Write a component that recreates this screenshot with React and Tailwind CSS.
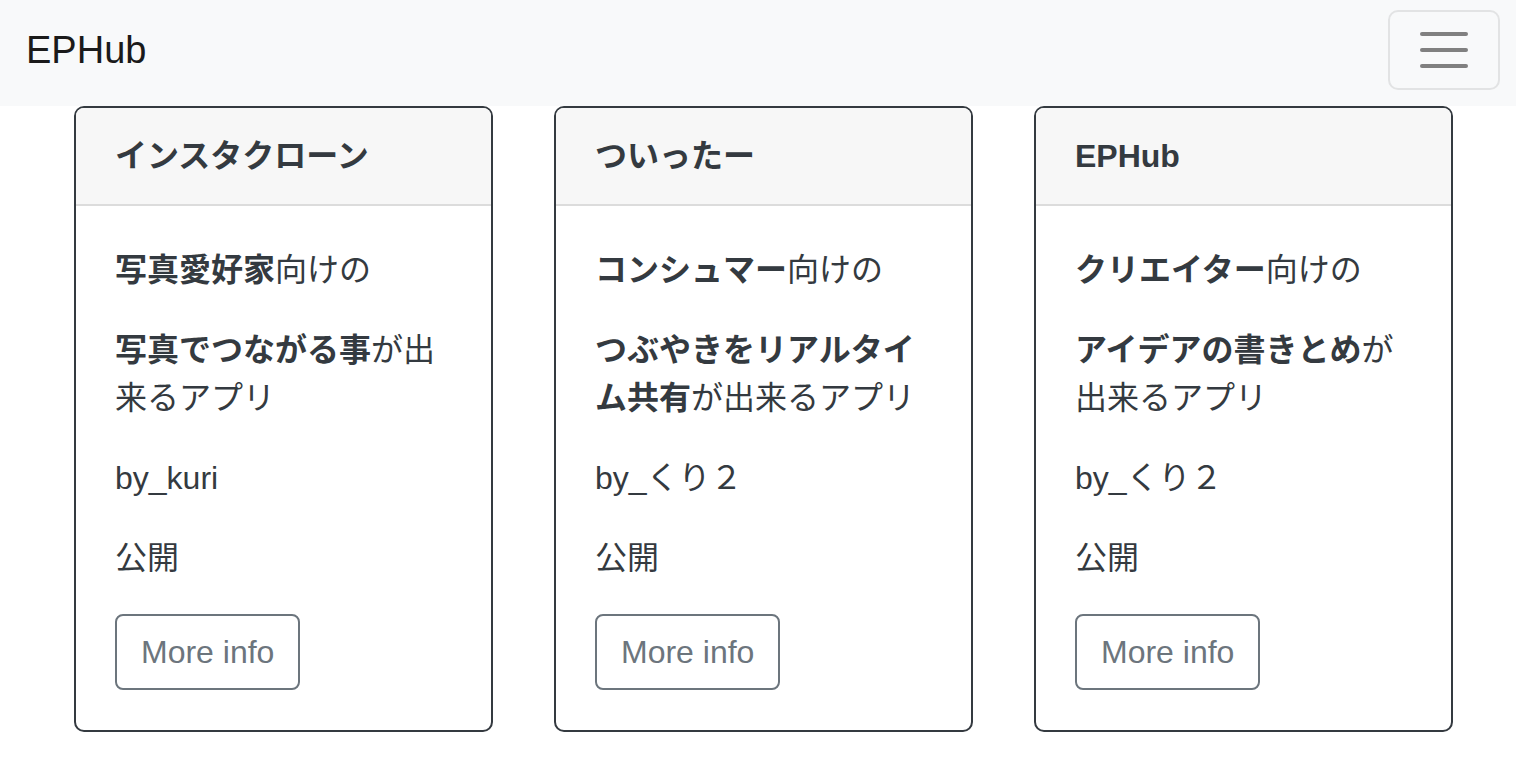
import React from "react";

const apps = [
    {
        title: "インスタクローン",
        target: "写真愛好家",
        feature: "写真でつながる事",
        author: "by_kuri",
    },
    {
        title: "ついったー",
        target: "コンシュマー",
        feature: "つぶやきをリアルタイム共有",
        author: "by_くり２",
    },
    {
        title: "EPHub",
        target: "クリエイター",
        feature: "アイデアの書きとめ",
        author: "by_くり２",
    },
];

function AppCard({ app }) {
    return (
        <div className="w-[419px] shrink-0 border-2 border-[#343a40] rounded-[10px] overflow-hidden bg-white">
            <div className="h-[98px] px-[39px] flex items-center bg-[#f7f7f7] border-b-2 border-[#dcdcdc]">
                <span className="font-bold text-[32px] leading-[48px] text-[#343a40]">
                    {app.title}
                </span>
            </div>
            <div className="px-[39px] pt-[40px] pb-[40px] text-[32px] leading-[48px] text-[#343a40]">
                <p className="mb-[32px]">
                    <span className="font-bold">{app.target}</span>向けの
                </p>
                <p className="mb-[32px]">
                    <span className="font-bold">{app.feature}</span>が出来るアプリ
                </p>
                <p className="mb-[32px]">{app.author}</p>
                <p className="mb-[32px]">公開</p>
                <button className="h-[76px] px-[24px] border-2 border-[#6c757d] rounded-[8px] text-[#6c757d] text-[32px] leading-[48px]">
                    More info
                </button>
            </div>
        </div>
    );
}

export default function App() {
    return (
        <div
            className="min-h-[758px] bg-white"
            style={{ fontFamily: '"Liberation Sans", "Noto Sans CJK JP", sans-serif' }}
        >
            <nav className="h-[106px] bg-[#f8f9fa] flex items-center justify-between pl-[26px] pr-[16px]">
                <span className="mb-[6px] text-[38px] leading-[60px] text-[#1a1a1a]">EPHub</span>
                <button className="w-[112px] h-[80px] mb-[6px] border-2 border-[#e2e3e4] rounded-[10px] flex flex-col items-center justify-center gap-[12px]">
                    <span className="block w-[48px] h-[4px] rounded-full bg-[#808080]"></span>
                    <span className="block w-[48px] h-[4px] rounded-full bg-[#808080]"></span>
                    <span className="block w-[48px] h-[4px] rounded-full bg-[#808080]"></span>
                </button>
            </nav>
            <div className="flex gap-[61px] pl-[74px]">
                {apps.map((app) => (
                    <AppCard key={app.title} app={app} />
                ))}
            </div>
        </div>
    );
}
